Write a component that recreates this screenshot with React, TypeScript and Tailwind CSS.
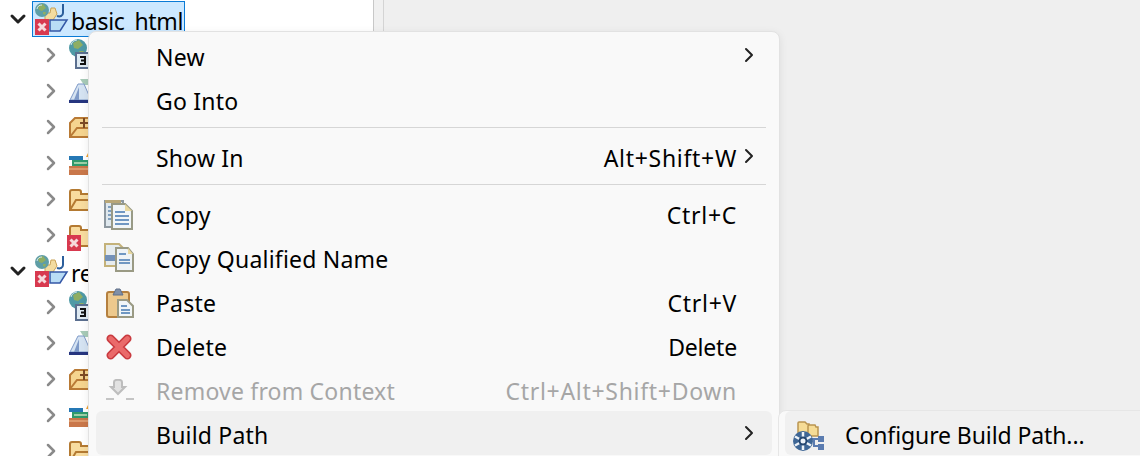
import { ChevronDown, ChevronRight } from "lucide-react";
import type { ReactNode } from "react";

function ErrorBadge({ x, y }: { x: number; y: number }) {
  return (
    <g transform={`translate(${x} ${y})`}>
      <rect width="14" height="16" fill="#d8394f" />
      <path d="M3.500 4.500l7 7M10.500 4.500l-7 7" stroke="#f6d9dc" strokeWidth="3" />
    </g>
  );
}

function ProjectIcon() {
  return (
    <svg width="36" height="36" viewBox="0 0 36 36" className="shrink-0" aria-hidden>
      <path d="M12 12h5l1-5h4l2 6-4 6H12z" fill="#f3dca0" stroke="#c9a257" />
      <circle cx="9" cy="9" r="7" fill="#5f9ea6" />
      <path d="M5 5l5-2 3 4-4 3-3-1zM10 11l3 0-1 3-2-1z" fill="#8fae63" />
      <path d="M4 8a5 5 0 0 1 5-4" stroke="#d8e8ea" fill="none" />
      <path d="M30 3v9c0 3-3 4-6 3" stroke="#2c5f9c" strokeWidth="2" fill="none" />
      <path d="M17 19h17l-7 11H17z" fill="#b9dcf5" stroke="#3457a6" strokeWidth="1.500" />
      <ErrorBadge x={2} y={18} />
    </svg>
  );
}

function JarGlobeIcon() {
  return (
    <svg width="24" height="36" viewBox="0 0 24 36" aria-hidden>
      <circle cx="11" cy="11" r="9" fill="#4f9aa6" />
      <path d="M6 6l6-3 4 5-5 4-4-1zM12 14l5 0-3 4z" fill="#8fae63" />
      <path d="M4 8a7 7 0 0 1 6-5" stroke="#d8e8ea" fill="none" />
      <rect x="9" y="16" width="15" height="15" fill="#dfeaf2" stroke="#5b6f8f" strokeWidth="2" />
      <path d="M13 20h5v7h-5M14 23.500h3" fill="none" stroke="#111" strokeWidth="2" />
    </svg>
  );
}

function FlaskIcon() {
  return (
    <svg width="24" height="36" viewBox="0 0 24 36" aria-hidden>
      <path d="M13 6l8 0v6h-4z" fill="#a8cbb8" />
      <path d="M11 11h6l7 16H3z" fill="#d5e3f2" stroke="#7f9ac8" />
      <path d="M12 14l-5 13h5z" fill="#7f9ac8" />
      <rect x="2" y="27" width="22" height="3" fill="#26357f" />
    </svg>
  );
}

function PackageIcon() {
  return (
    <svg width="24" height="36" viewBox="0 0 24 36" aria-hidden>
      <path d="M3 14l5-5h16v19H3z" fill="#f5d48f" stroke="#b97a35" strokeWidth="2" />
      <path d="M3 28l7-9h14" fill="none" stroke="#b97a35" strokeWidth="2" />
      <path d="M17 9v10M13 14h11" stroke="#7c4a25" strokeWidth="2" />
    </svg>
  );
}

function BooksIcon() {
  return (
    <svg width="24" height="36" viewBox="0 0 24 36" aria-hidden>
      <path d="M19 12l2-4 2 4z" fill="#f0a030" />
      <rect x="2" y="11" width="14" height="4" fill="#2578b5" />
      <rect x="5" y="15" width="19" height="6" fill="#2f9a6c" />
      <rect x="7" y="17" width="13" height="2" fill="#9ed0a8" />
      <rect x="2" y="21" width="22" height="9" fill="#c9774a" />
      <rect x="2" y="23" width="22" height="2" fill="#dd9a6c" />
    </svg>
  );
}

function FolderIcon() {
  return (
    <svg width="24" height="36" viewBox="0 0 24 36" aria-hidden>
      <path d="M3 11a2 2 0 0 1 2-2h7a2 2 0 0 1 2 2v2h10v16H3z" fill="#f8dc9f" stroke="#b47a32" strokeWidth="2" />
      <path d="M3 29l6-10h15" fill="none" stroke="#b47a32" strokeWidth="2" />
    </svg>
  );
}

function ErrorFolderIcon() {
  return (
    <svg width="24" height="36" viewBox="0 0 24 36" aria-hidden>
      <path d="M3 11a2 2 0 0 1 2-2h7a2 2 0 0 1 2 2v2h10v16H3z" fill="#f8dc9f" stroke="#b47a32" strokeWidth="2" />
      <ErrorBadge x={0} y={18} />
    </svg>
  );
}

function CopyIcon() {
  return (
    <svg width="30" height="32" viewBox="0 0 30 32" aria-hidden>
      <rect x="1" y="2" width="18" height="26" fill="#dfe8ee" stroke="#8d98a0" strokeWidth="2" />
      <path d="M1 1h16v3H1z" fill="#b8a778" />
      <path d="M4 8h5M4 12h5M4 16h5M4 20h5" stroke="#7fa0c0" strokeWidth="2" />
      <path d="M8 5h13l7 7v18H8z" fill="#f1f6f8" stroke="#989a86" strokeWidth="2" />
      <path d="M21 5l7 7h-7z" fill="#e8d8a0" />
      <path d="M11 13h10M11 17h14M11 21h14M11 25h14" stroke="#6f97c2" strokeWidth="2" />
    </svg>
  );
}

function CopyQualifiedIcon() {
  return (
    <svg width="30" height="30" viewBox="0 0 30 30" className="-mt-[2px]" aria-hidden>
      <path d="M1 1h14l4 4v18H1z" fill="#e6ecef" stroke="#c4b27a" strokeWidth="2" />
      <path d="M1 12h10v6H1z" fill="#7391b8" />
      <path d="M12 5h12l5 6v17H12z" fill="#eef3f6" stroke="#9a9a84" strokeWidth="2" />
      <path d="M24 5l5 6h-5z" fill="#e8d8a0" />
      <path d="M15 11h7M15 17h11M15 20h11" stroke="#6f97c2" strokeWidth="2" />
    </svg>
  );
}

function PasteIcon() {
  return (
    <svg width="28" height="32" viewBox="0 0 28 32" className="ml-[2px]" aria-hidden>
      <rect x="1" y="5" width="22" height="25" rx="2" fill="#edc98d" stroke="#b5803f" strokeWidth="2" />
      <path d="M7 8l3-6h4l3 6z" fill="#8090a8" stroke="#5f6f88" />
      <path d="M12 13h9l6 6v11H12z" fill="#f1f6f8" stroke="#9a9a84" strokeWidth="2" />
      <path d="M15 19h6M15 23h9M15 26h9" stroke="#6f97c2" strokeWidth="2" />
    </svg>
  );
}

function DeleteIcon() {
  return (
    <svg width="26" height="26" viewBox="0 0 28 28" className="ml-[2px]" aria-hidden>
      <path d="M5 5l18 18M23 5L5 23" stroke="#c93a3f" strokeWidth="9" strokeLinecap="round" />
      <path d="M5 5l18 18M23 5L5 23" stroke="#ea6a6a" strokeWidth="5.500" strokeLinecap="round" />
    </svg>
  );
}

function RemoveIcon() {
  return (
    <svg width="28" height="22" viewBox="0 0 28 22" className="-mt-[3px] ml-[2px]" aria-hidden>
      <path d="M8 3c0-3 8-3 8 0v5h3l-7 7-7-7h3z" fill="#e2e2e2" stroke="#bdbdbd" strokeWidth="2" />
      <path d="M0 20h8M20 20h8" stroke="#c4c4c4" strokeWidth="2" />
    </svg>
  );
}

function BuildPathIcon() {
  return (
    <svg width="32" height="32" viewBox="0 0 32 32" aria-hidden>
      <path d="M5 4a1 1 0 0 1 1-1h6l2 2h2v10H5z" fill="#f6dc96" stroke="#b99450" strokeWidth="1.500" />
      <path d="M15 7a1 1 0 0 1 1-1h6l1 2h2v9H15z" fill="#f6dc96" stroke="#b99450" strokeWidth="1.500" />
      <path d="M19 20h6M21 20v7h4" stroke="#5b7cb0" strokeWidth="2" fill="none" />
      <rect x="25" y="17" width="6" height="6" fill="#5b7cb0" />
      <rect x="25" y="25" width="6" height="6" fill="#5b7cb0" />
      <circle cx="10" cy="22" r="10" fill="#3f6796" />
      <path d="M10 13v18M2 17.500l16 9M18 17.500L2 26.500" stroke="#eef3f8" strokeWidth="2.500" />
      <circle cx="10" cy="22" r="3.500" fill="#eef3f8" stroke="#24466f" strokeWidth="2" />
    </svg>
  );
}

const children: ReactNode[] = [
  <JarGlobeIcon />,
  <FlaskIcon />,
  <PackageIcon />,
  <BooksIcon />,
  <FolderIcon />,
  <ErrorFolderIcon />,
];

function TreeChild({ icon }: { icon: ReactNode }) {
  return (
    <div className="flex h-9 items-center">
      <ChevronRight className="ml-[39px] h-6 w-6 text-[#8a8a8a]" strokeWidth={2.5} aria-hidden />
      <div className="ml-[4px] flex w-6 items-center">{icon}</div>
    </div>
  );
}

function TreeProject({ name, selected }: { name: string; selected?: boolean }) {
  return (
    <div className="flex h-9 items-center">
      <ChevronDown className="ml-[6px] h-6 w-6 text-[#222]" strokeWidth={3} aria-hidden />
      <div
        className={`ml-[2px] flex h-9 items-center ${
          selected ? "w-[153px] border border-[#0a7bd6] bg-[#cce8ff]" : "border border-transparent"
        }`}
      >
        <ProjectIcon />
        <span className="ml-[2px] pt-[4px] text-[23px] leading-none tracking-[-0.3px] text-black">{name}</span>
      </div>
    </div>
  );
}

type MenuRow = {
  label: string;
  shortcut?: string;
  arrow?: boolean;
  disabled?: boolean;
  active?: boolean;
  icon?: ReactNode;
};

function Row({ label, shortcut, arrow, disabled, active, icon }: MenuRow) {
  return (
    <div
      className={`relative mx-[7px] flex h-11 items-center rounded-md pt-1 ${
        active ? "bg-[#f0f0f0]" : ""
      } ${disabled ? "text-[#a6a6a6]" : "text-black"}`}
    >
      <span className="flex w-[60px] shrink-0 items-center pl-[8px]">{icon}</span>
      <span className="tracking-[0.2px]">{label}</span>
      {shortcut && (
        <span
          className={`ml-auto mr-[35px] ${
            shortcut.includes("+") ? "tracking-[0.7px]" : "tracking-[-0.2px]"
          }`}
        >
          {shortcut}
        </span>
      )}
      {arrow && (
        <ChevronRight
          className="absolute right-[11px] top-[10px] h-6 w-6 text-[#222]"
          strokeWidth={2}
          aria-hidden
        />
      )}
    </div>
  );
}

function Separator() {
  return <div className="mx-[13px] my-[6px] h-px bg-[#d6d6d6]" />;
}

export default function App() {
  return (
    <div className="relative h-[456px] w-[1140px] overflow-hidden bg-[#efefef] font-['Noto_Sans',sans-serif] text-[23px]">
      <div className="flex h-full">
        <div className="h-full w-[374px] border-r border-[#c8c8c8] bg-white pt-[1px]">
          <TreeProject name="basic_html" selected />
          {children.map((icon, index) => (
            <TreeChild key={index} icon={icon} />
          ))}
          <TreeProject name="re" />
          {children.slice(0, 5).map((icon, index) => (
            <TreeChild key={index} icon={icon} />
          ))}
        </div>
        <div className="h-full w-[10px] border-r border-[#d4d4d4] bg-[#f0f0f0]" />
      </div>

      <div className="absolute left-[88px] top-[31px] h-[440px] w-[692px] rounded-lg border border-[#e2e2e2] bg-[#f9f9f9] pt-[1px] shadow-[0_2px_8px_rgba(0,0,0,0.08)]">
        <Row label="New" arrow />
        <Row label="Go Into" />
        <Separator />
        <Row label="Show In" shortcut="Alt+Shift+W" arrow />
        <Separator />
        <Row label="Copy" shortcut="Ctrl+C" icon={<CopyIcon />} />
        <Row label="Copy Qualified Name" icon={<CopyQualifiedIcon />} />
        <Row label="Paste" shortcut="Ctrl+V" icon={<PasteIcon />} />
        <Row label="Delete" shortcut="Delete" icon={<DeleteIcon />} />
        <Row label="Remove from Context" shortcut="Ctrl+Alt+Shift+Down" disabled icon={<RemoveIcon />} />
        <Row label="Build Path" arrow active />
      </div>

      <div className="absolute left-[778px] top-[410px] h-[60px] w-[400px] rounded-lg border border-[#e6e6e6] bg-[#f9f9f9] pl-[6px]">
        <div className="flex h-11 items-center rounded-md bg-[#f0f0f0] pt-1 text-black">
          <span className="ml-[8px] flex w-[52px] items-center">
            <BuildPathIcon />
          </span>
          <span className="tracking-[-0.1px]">Configure Build Path...</span>
        </div>
      </div>
    </div>
  );
}
